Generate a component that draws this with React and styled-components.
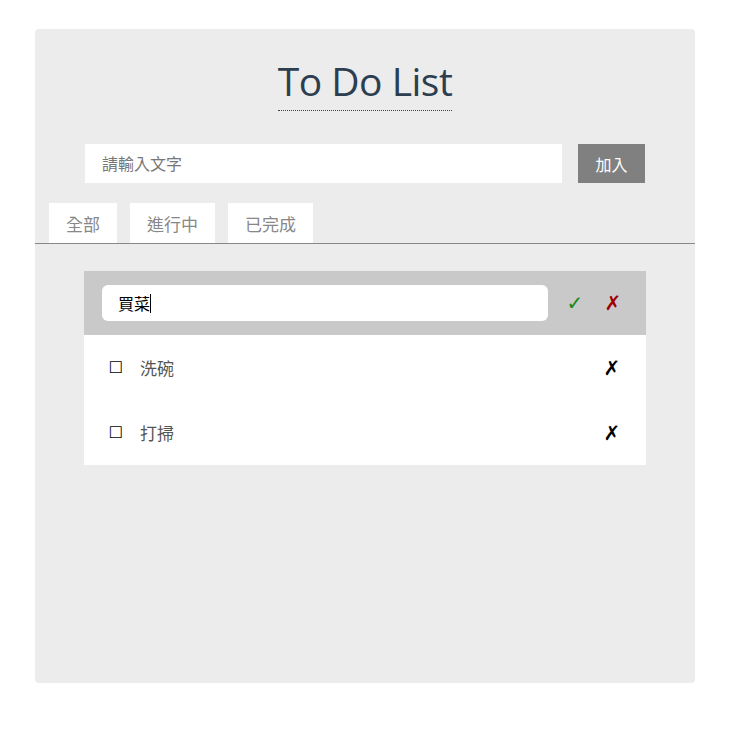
import styled, { createGlobalStyle } from "styled-components";

const GlobalStyle = createGlobalStyle`
  body {
    margin: 0;
    background: #ffffff;
    font-family: "Open Sans", "Noto Sans CJK TC", sans-serif;
  }
`;

const todos = [
  { id: 1, text: "買菜", editing: true },
  { id: 2, text: "洗碗" },
  { id: 3, text: "打掃" },
];

const tabs = ["全部", "進行中", "已完成"];

export default function App() {
  return (
    <>
      <GlobalStyle />
      <Card>
        <TitleRow>
          <Title>To Do List</Title>
        </TitleRow>
        <AddForm>
          <AddInput placeholder="請輸入文字" />
          <AddButton>加入</AddButton>
        </AddForm>
        <TabBar>
          {tabs.map((t) => (
            <Tab key={t}>{t}</Tab>
          ))}
        </TabBar>
        <List>
          {todos.map((todo) =>
            todo.editing ? (
              <EditRow key={todo.id}>
                <EditInput>
                  {todo.text}
                  <Caret />
                </EditInput>
                <Mark color="#1a8a1a">✓</Mark>
                <Mark color="#a00000">✗</Mark>
              </EditRow>
            ) : (
              <Row key={todo.id}>
                <Box>☐</Box>
                <ItemText>{todo.text}</ItemText>
                <Mark color="#000000" $push>✗</Mark>
              </Row>
            )
          )}
        </List>
      </Card>
    </>
  );
}

const Card = styled.div`
  width: 660px;
  min-height: 654px;
  margin: 29px auto 0;
  box-sizing: border-box;
  padding-top: 28px;
  background: #ececec;
  border-radius: 4px;
`;

const TitleRow = styled.div`
  display: flex;
  justify-content: center;
`;

const Title = styled.h1`
  margin: 0;
  padding-bottom: 5px;
  font-size: 39px;
  line-height: 48px;
  font-weight: 400;
  color: #2c3e50;
  border-bottom: 1px dotted #444;
  font-family: "Open Sans", sans-serif;
  letter-spacing: -0.5px;
`;

const AddForm = styled.div`
  display: flex;
  gap: 16px;
  margin: 33px 50px 0;
`;

const AddInput = styled.input`
  flex: 1;
  height: 39px;
  box-sizing: border-box;
  border: none;
  outline: none;
  padding: 0 17px;
  font-size: 16px;
  font-family: "Open Sans", "Noto Sans CJK TC", sans-serif;
  background: #ffffff;
  &::placeholder {
    color: #777;
  }
`;

const AddButton = styled.button`
  width: 67px;
  height: 39px;
  border: none;
  background: #808080;
  color: #ffffff;
  font-size: 16px;
  font-family: "Open Sans", "Noto Sans CJK TC", sans-serif;
`;

const TabBar = styled.div`
  display: flex;
  gap: 13px;
  margin-top: 20px;
  padding-left: 14px;
  border-bottom: 1px solid #888;
`;

const Tab = styled.div`
  height: 40px;
  padding: 0 17px;
  display: flex;
  align-items: center;
  background: #ffffff;
  color: #888;
  font-size: 17px;
`;

const List = styled.div`
  margin: 27px 49px 0;
  background: #ffffff;
`;

const EditRow = styled.div`
  display: flex;
  align-items: center;
  height: 64px;
  padding: 0 13px 0 18px;
  background: #c9c9c9;
`;

const EditInput = styled.div`
  flex: none;
  width: 446px;
  height: 36px;
  box-sizing: border-box;
  padding: 0 16px;
  display: flex;
  align-items: center;
  background: #ffffff;
  border-radius: 6px;
  color: #000;
  font-size: 16px;
  margin-right: 8px;
`;

const Caret = styled.span`
  display: inline-block;
  width: 1px;
  height: 19px;
  background: #000;
`;

const Mark = styled.span`
  flex: none;
  width: 38px;
  text-align: center;
  color: ${(p) => p.color};
  font-size: 20px;
  font-family: "DejaVu Sans", sans-serif;
  margin-left: ${(p) => (p.$push ? "auto" : "0")};
`;

const Row = styled.div`
  display: flex;
  align-items: center;
  height: 65px;
  padding: 0 15px 0 24px;
`;

const Box = styled.span`
  width: 16px;
  font-size: 16px;
  color: #000;
  text-align: center;
  font-family: "DejaVu Sans", sans-serif;
`;

const ItemText = styled.span`
  margin-left: 16px;
  font-size: 17px;
  color: #555;
`;
